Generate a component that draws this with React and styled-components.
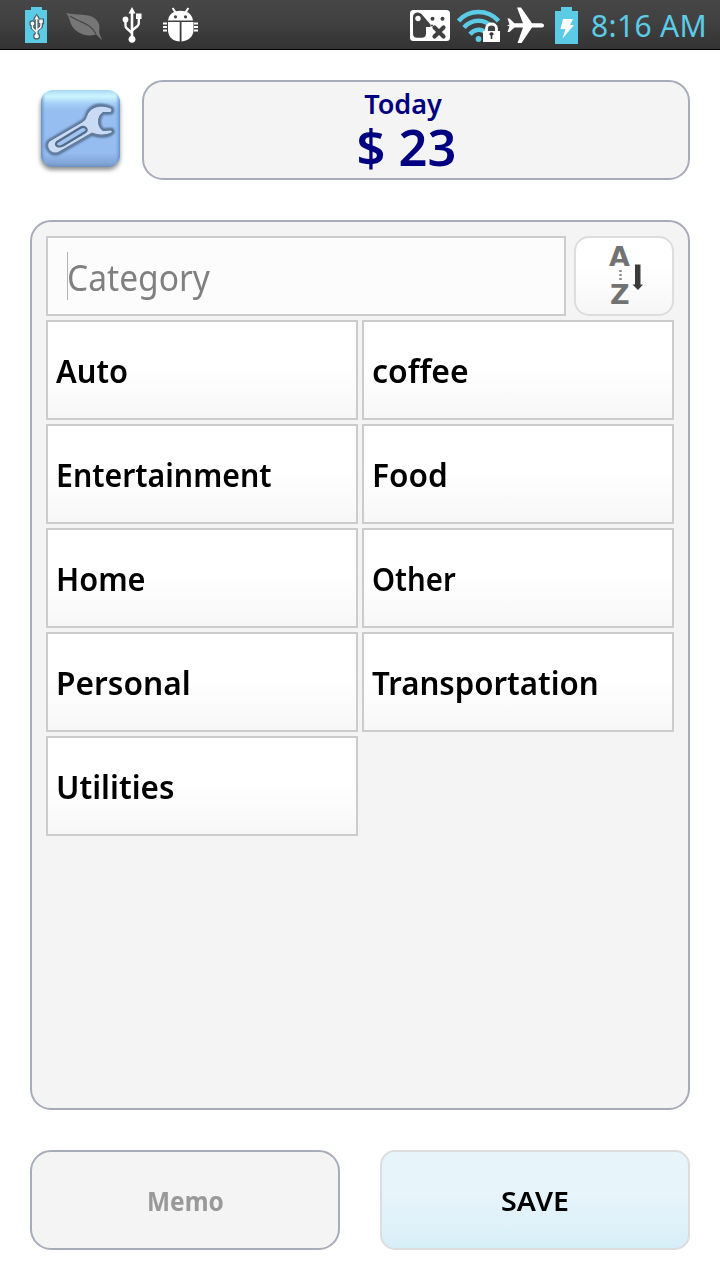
import React from "react";
import styled, { createGlobalStyle } from "styled-components";

const GlobalStyle = createGlobalStyle`
  * { box-sizing: border-box; }
  body { margin: 0; background: #fff; font-family: "Noto Sans", "Open Sans", sans-serif; }
  button { font-family: inherit; padding: 0; margin: 0; }
`;

const Screen = styled.div`
  width: 720px;
  height: 1280px;
  display: flex;
  flex-direction: column;
  overflow: hidden;
  background: #fff;
`;

const StatusBar = styled.header`
  flex: none;
  height: 50px;
  display: flex;
  justify-content: space-between;
  padding: 0 13px 0 24px;
  background: linear-gradient(#464646, #414141 45%, #333);
  border-bottom: 1px solid #000;
`;

const IconGroup = styled.div`
  display: flex;
  gap: ${(p) => p.$gap}px;
`;

const StatusIcon = styled.svg`
  display: block;
  flex: none;
  height: 49px;
`;

const Clock = styled.span`
  width: 116px;
  margin-left: 6px;
  font-size: 30px;
  line-height: 52px;
  letter-spacing: 0.35px;
  white-space: nowrap;
  color: #5ccbe6;
`;

const Content = styled.main`
  flex: 1;
  display: flex;
  flex-direction: column;
  gap: 40px;
  padding: 30px;
`;

const Header = styled.section`
  display: flex;
  justify-content: space-between;
  height: 100px;
`;

const SettingsButton = styled.button`
  width: 100px;
  height: 100px;
  border: 0;
  background: none;
  svg { display: block; }
`;

const TotalCard = styled.div`
  width: 548px;
  border: 2px solid #a8acb8;
  border-radius: 21px;
  background: #f4f4f4;
  color: #000080;
  font-weight: 600;
  display: flex;
  flex-direction: column;
  align-items: center;
  padding: 4px 20px 0 0;
`;

const Label = styled.span`
  display: block;
  white-space: nowrap;
  font-size: ${(p) => p.$size}px;
  line-height: ${(p) => p.$line}px;
  padding-top: ${(p) => p.$drop || 0}px;
  transform: scaleX(${(p) => p.$stretch || 1});
  transform-origin: ${(p) => (p.$centered ? "center" : "left")};
`;

const TodayLabel = styled(Label)`
  margin-right: 6px;
`;

const Panel = styled.section`
  height: 890px;
  border: 2px solid #a8acb8;
  border-radius: 21px;
  background: #f4f4f4;
  padding: 14px;
  display: flex;
  flex-direction: column;
  gap: 4px;
`;

const SearchRow = styled.div`
  display: flex;
  justify-content: space-between;
  height: 80px;
`;

const SearchField = styled.div`
  width: 520px;
  border: 2px solid #ccc;
  background: #fcfcfc;
  padding-left: 19px;
  display: flex;
  align-items: center;
  color: #808080;
`;

const Caret = styled.i`
  width: 1px;
  height: 48px;
  margin-right: -1px;
  background: #b4b4b4;
`;

const SortButton = styled.button`
  width: 100px;
  border: 2px solid #ddd;
  border-radius: 15px;
  background: linear-gradient(#fff 35%, #f6f6f6);
  svg { display: block; margin: 0 auto; }
`;

const CategoryGrid = styled.div`
  display: grid;
  grid-template-columns: 312px 312px;
  grid-auto-rows: 100px;
  gap: 4px;
`;

const CategoryButton = styled.button`
  border: 2px solid #ccc;
  background: linear-gradient(#fff 45%, #f7f7f7);
  padding: 0 0 0 8px;
  text-align: left;
  font-weight: 600;
  color: #000;
`;

const Footer = styled.footer`
  display: flex;
  justify-content: space-between;
  height: 100px;
`;

const ActionButton = styled.button`
  width: 310px;
  display: flex;
  align-items: center;
  justify-content: center;
  font-weight: ${(p) => (p.$primary ? 600 : 700)};
  border: 2px solid ${(p) => (p.$primary ? "#ddd" : "#a8acb8")};
  border-radius: ${(p) => (p.$primary ? 15 : 21)}px;
  background: ${(p) => (p.$primary ? "linear-gradient(#e7f4fa 42%, #e2f2fa 60%, #def1f9 78%, #d5eff6)" : "#f4f4f4")};
  color: ${(p) => (p.$primary ? "#000" : "#999")};
`;

const BLUE = "#5ccbe6";

function UsbGlyph() {
  return (
    <g fill="currentColor" stroke="currentColor">
      <path d="M132 38V13" fill="none" strokeWidth="2.6" />
      <path d="M125.500 19V25.500Q125.500 27.500 127 28.500L132 33" fill="none" strokeWidth="2.4" />
      <path d="M138.800 16V23Q138.800 25 137.500 26L132 30.500" fill="none" strokeWidth="2.4" />
      <path d="M132 7L135.500 13.500H128.500Z" stroke="none" />
      <rect x="136" y="13.500" width="5.500" height="5.500" stroke="none" />
      <circle cx="125.500" cy="19.500" r="2.900" stroke="none" />
      <circle cx="132" cy="39.300" r="3.400" stroke="none" />
    </g>
  );
}

function BatteryUsb() {
  return (
    <StatusIcon width="24" viewBox="24 0 24 49">
      <path d="M25 10H31V7H42V10H47V43H25Z" fill={BLUE} />
      <g transform="translate(-48.500 10.800) scale(.645)">
        <g>
          <path d="M132 39V8M125.500 18V26L132 32M139 15V24L132 30" fill="none" stroke="#485c63" strokeWidth="6" />
          <path d="M132 4L138 14H126ZM134.500 12h9v9h-9Z" fill="#485c63" />
          <circle cx="125.500" cy="19.500" r="4.800" fill="#485c63" />
          <circle cx="132" cy="39.300" r="5.300" fill="#485c63" />
        </g>
        <g color="#f4f4f4"><UsbGlyph /></g>
      </g>
    </StatusIcon>
  );
}

function Leaf() {
  return (
    <StatusIcon width="38" viewBox="65 0 38 49">
      <path d="M66 13C78 16 92 12 98 22C101 27 98 31 100 35L102 40C99 38 98 35 95.500 34.500C84 38 74 31 71 24C69 19 69 16 66 13Z" fill="#767676" />
      <path d="M70 16C80 23 91 23 96 34" fill="none" stroke="#484848" strokeWidth="1.300" />
    </StatusIcon>
  );
}

const UsbIcon = styled(StatusIcon)`
  margin-left: 1px;
  color: #fff;
`;

const BugIcon = styled(StatusIcon)`
  margin-left: 2px;
`;

function Bug() {
  return (
    <BugIcon width="36" viewBox="162 0 36 49">
      <g fill="#fff">
        <path d="M168 20.500C168.500 16 171 13.200 174 12L171.800 8.600L173.400 7.600L176 11.300Q180 10.300 185 11.300L187.600 7.600L189.200 8.600L187 12C190 13.500 192.500 16 193 20.500Z" />
        <path d="M168 22H179.700V41.500C171 41 168 35 168 30ZM181.500 22H193.500V30C193.500 36 189 41 181.500 41.500Z" />
        <path d="M163 22.500h4v2h-4zM163 26h4v2h-4zM163 29.500h4v2h-4zM194 22.500h4v2h-4zM194 26h4v2h-4zM194 29.500h4v2h-4z" />
      </g>
      <circle cx="175.500" cy="16.800" r="1.600" fill="#424242" />
      <circle cx="185.500" cy="16.800" r="1.600" fill="#424242" />
    </BugIcon>
  );
}

function MotionIcon() {
  return (
    <StatusIcon width="40" viewBox="410 0 40 49">
      <rect x="410" y="10" width="40" height="31" rx="3.500" fill="#fff" />
      <path d="M413 17Q413 12.500 418 12.500Q420 12.500 421.500 14L430.500 24.500V27H426V33.500Q426 37.800 421.500 37.800H417Q413 37.800 413 33.500Z" fill="#404040" />
      <circle cx="418" cy="18.500" r="2.700" fill="#fff" />
      <g fill="#404040">
        <circle cx="432.500" cy="18.700" r="2" /><circle cx="442.500" cy="18.700" r="2" />
        <circle cx="432" cy="25.500" r="1" />
      </g>
      <path d="M434.500 27.500L443.500 36.500M443.500 27.500L434.500 36.500" stroke="#404040" strokeWidth="4.200" strokeLinecap="round" />
    </StatusIcon>
  );
}

function WifiLock() {
  return (
    <StatusIcon width="43" viewBox="457 0 43 49">
      <g fill="none" stroke={BLUE} strokeWidth="4.600">
        <path d="M458.500 21C469 9 488 9 498.500 21" />
        <path d="M464 27.500C472 18.500 485 18.500 492.500 27.500" />
        <path d="M470 34.200C475 28.500 482 28.500 486 33" />
      </g>
      <circle cx="478.500" cy="39" r="2.900" fill={BLUE} />
      <path d="M486.500 33V28.500C486.500 22.500 496.500 22.500 496.500 28.500V33" fill="#444" stroke="#fff" strokeWidth="2.800" />
      <rect x="483" y="31" width="17" height="11" fill="#fff" />
      <path d="M489.300 34.500a2.200 2.200 0 0 1 4.400 0l-1.400 1v3.500h-1.600v-3.500z" fill="#333" />
    </StatusIcon>
  );
}

function Plane() {
  return (
    <StatusIcon width="37" viewBox="507 0 37 49">
      <path d="M507.500 18.500H509.500L514.500 23.300H523L517 7.500H521L532 23.300H541Q544 23.500 544 25.500Q544 27.500 541 27.500H532L521.500 43H517.500L523 27.500H514.500L509.500 32H507.500L509.500 26.500L507 25.500L509.500 24.500Z" fill="#fff" />
    </StatusIcon>
  );
}

const BatteryIcon = styled(StatusIcon)`
  margin-left: 4px;
`;

function BatteryCharging() {
  return (
    <BatteryIcon width="23" viewBox="555 0 23 49">
      <path d="M555 11H561V7H572V11H578V44H555Z" fill={BLUE} />
      <path d="M563 19H573L570 25H574L562.500 38.500L565.500 29H560.500Z" fill="#fff" />
    </BatteryIcon>
  );
}

function SettingsIcon() {
  return (
    <svg width="100" height="100" viewBox="30 80 100 100">
      <defs>
        <linearGradient id="tile" x2="0" y2="1">
          <stop offset="0" stopColor="#a5d7f4" /><stop offset=".08" stopColor="#cdf5ff" />
          <stop offset=".18" stopColor="#a4cef7" /><stop offset=".26" stopColor="#97bff0" />
          <stop offset=".82" stopColor="#96bcf0" /><stop offset=".95" stopColor="#82a5d7" />
          <stop offset="1" stopColor="#6d8fbc" />
        </linearGradient>
        <linearGradient id="edges">
          <stop offset="0" stopColor="#4878b3" stopOpacity=".65" /><stop offset=".06" stopColor="#739fd8" stopOpacity="0" />
          <stop offset=".94" stopColor="#739fd8" stopOpacity="0" /><stop offset="1" stopColor="#4878b3" stopOpacity=".65" />
        </linearGradient>
        <filter id="shade" x="-20%" y="-20%" width="140%" height="140%"><feGaussianBlur stdDeviation="2.200" /></filter>
        <filter id="glow"><feGaussianBlur stdDeviation=".8" /></filter>
      </defs>
      <rect x="40.500" y="94" width="79.500" height="76" rx="12" fill="#555" opacity=".65" filter="url(#shade)" />
      <rect x="41" y="90" width="79" height="77" rx="12" fill="url(#tile)" />
      <rect x="41" y="90" width="79" height="77" rx="12" fill="url(#edges)" />
      <g strokeLinejoin="round">
        <path d="M49 141L83 121C87 119 86 114 89 110.500C94 104 104 104 112 108Q114 113 109.500 113H103C98 116 98 127 103 130L112 129.500Q115 132 110 134.500C103 137 97 136 92 134L59 153C51 157 43 146 49 141Z" fill="#c9ddf7" stroke="#496385" strokeWidth="3" filter="url(#glow)" />
        <path d="M49.500 141L83 121.500C87 119 86 114 89.500 111C95 105 104 105 111.500 108.500Q113 112 109.500 112.500H103C97 116 97 127 103 130.500L111 130Q114 132 110 133.500C103 136 97 135 92 133L59 152C52 156 44 147 49.500 141Z" fill="#c9dbf4" stroke="#5c7595" strokeWidth="1" />
        <path d="M57 142L80 128C84 125 89 129 85.500 132L63 145.500C58 148 54 145 57 142Z" fill="#9fc3ef" stroke="#526b8b" strokeWidth="2.200" />
      </g>
    </svg>
  );
}

const SortLetter = styled.text`
  font: bold 27px "DejaVu Sans", sans-serif;
  fill: #727272;
  text-anchor: middle;
`;

function SortIcon() {
  return (
    <svg width="40" height="76" viewBox="604 238 40 76">
      <SortLetter x="619.500" y="266">A</SortLetter>
      <SortLetter x="619.800" y="304">Z</SortLetter>
      <path d="M620.500 270V281" stroke="#8b8b8b" strokeWidth="2.500" strokeDasharray="2 2" />
      <path d="M635 264.500H640.500V284.500H643L638 290L632.500 284.500H635Z" fill="#3b3b3b" />
    </svg>
  );
}

const categories = [
  { name: "Auto", stretch: 0.935 },
  { name: "coffee", stretch: 0.967 },
  { name: "Entertainment", stretch: 0.917 },
  { name: "Food", stretch: 0.957 },
  { name: "Home", stretch: 0.93 },
  { name: "Other", stretch: 0.89 },
  { name: "Personal", stretch: 0.96 },
  { name: "Transportation", stretch: 0.946 },
  { name: "Utilities", stretch: 0.952 },
];

export default function App() {
  return (
    <>
      <GlobalStyle />
      <Screen>
        <StatusBar>
          <IconGroup $gap={17}>
            <BatteryUsb />
            <Leaf />
            <UsbIcon width="22" viewBox="121 0 22 49"><UsbGlyph /></UsbIcon>
            <Bug />
          </IconGroup>
          <IconGroup $gap={7}>
            <MotionIcon />
            <WifiLock />
            <Plane />
            <BatteryCharging />
            <Clock>8:16 AM</Clock>
          </IconGroup>
        </StatusBar>
        <Content>
          <Header>
            <SettingsButton aria-label="Settings"><SettingsIcon /></SettingsButton>
            <TotalCard>
              <TodayLabel $size={27} $line={36} $centered>Today</TodayLabel>
              <Label $size={50} $line={50} $centered $stretch={1.01}>$ 23</Label>
            </TotalCard>
          </Header>
          <Panel>
            <SearchRow>
              <SearchField>
                <Caret />
                <Label $size={36} $line={48} $drop={3} $stretch={0.932}>Category</Label>
              </SearchField>
              <SortButton aria-label="Sort A to Z"><SortIcon /></SortButton>
            </SearchRow>
            <CategoryGrid>
              {categories.map(({ name, stretch }) => (
                <CategoryButton key={name}>
                  <Label $size={33} $line={46} $drop={2} $stretch={stretch}>{name}</Label>
                </CategoryButton>
              ))}
            </CategoryGrid>
          </Panel>
          <Footer>
            <ActionButton><Label $size={27} $line={36} $drop={2} $centered $stretch={0.905}>Memo</Label></ActionButton>
            <ActionButton $primary><Label $size={27} $line={36} $drop={2} $centered $stretch={1.06}>SAVE</Label></ActionButton>
          </Footer>
        </Content>
      </Screen>
    </>
  );
}
